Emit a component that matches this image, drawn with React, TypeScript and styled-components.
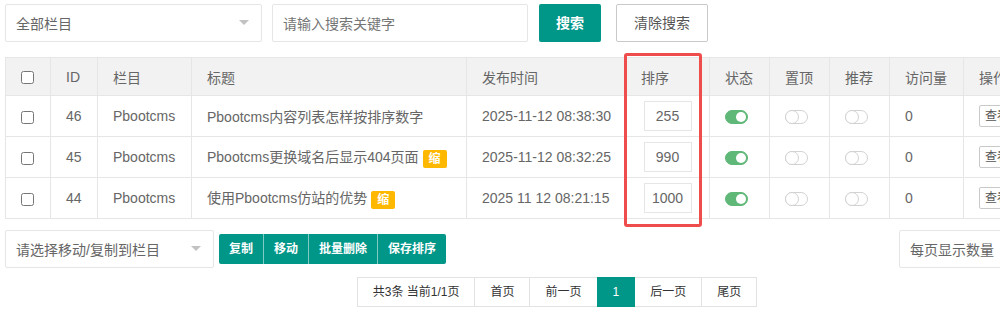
import React from "react";
import styled, { createGlobalStyle } from "styled-components";

const GlobalStyle = createGlobalStyle`
  html, body { margin: 0; padding: 0; overflow: hidden; background: #fff; }
  body {
    font-family: "Liberation Sans", "Noto Sans CJK SC", sans-serif;
    font-size: 14px;
    color: #666;
  }
`;

const Page = styled.div`
  width: 1103px;
  padding: 4px 0 0 5px;
`;

const Toolbar = styled.div`
  display: flex;
  align-items: center;
  height: 38px;
`;

const SelectBox = styled.div<{ $w: number; $ml?: number }>`
  position: relative;
  box-sizing: border-box;
  width: ${(p) => p.$w}px;
  height: 38px;
  margin-left: ${(p) => p.$ml ?? 0}px;
  border: 1px solid #e6e6e6;
  border-radius: 2px;
  padding-left: 10px;
  display: flex;
  align-items: center;
  color: #666;
  background: #fff;
  flex-shrink: 0;
`;

const Arrow = styled.span`
  position: absolute;
  right: 12px;
  top: 50%;
  margin-top: -3px;
  border: 5px solid transparent;
  border-top-color: #c2c2c2;
  border-bottom-width: 0;
`;

const Placeholder = styled.span`
  color: #757575;
`;

const PrimaryBtn = styled.div<{ $ml: number }>`
  box-sizing: border-box;
  height: 38px;
  line-height: 38px;
  padding: 0 17px;
  margin-left: ${(p) => p.$ml}px;
  background: #009688;
  color: #fff;
  border-radius: 2px;
  font-size: 14px;
  font-weight: bold;
`;

const PlainBtn = styled.div<{ $ml: number }>`
  box-sizing: border-box;
  height: 38px;
  line-height: 36px;
  padding: 0 17px;
  margin-left: ${(p) => p.$ml}px;
  background: #fff;
  color: #555;
  border: 1px solid #c9c9c9;
  border-radius: 2px;
  font-size: 14px;
`;

const TableWrap = styled.div`
  position: relative;
  margin-top: 15px;
`;

const Table = styled.table`
  width: 1103px;
  table-layout: fixed;
  border-collapse: collapse;
  border: 1px solid #e6e6e6;
`;

const Th = styled.th`
  height: 38px;
  padding: 0 15px;
  text-align: left;
  font-weight: normal;
  font-size: 14px;
  color: #666;
  background: #f2f2f2;
  border: 1px solid #e6e6e6;
  white-space: nowrap;
  overflow: hidden;
  box-sizing: border-box;
`;

const Td = styled.td`
  height: 41px;
  padding: 0 15px;
  font-size: 14px;
  color: #666;
  border: 1px solid #e6e6e6;
  white-space: nowrap;
  overflow: hidden;
  box-sizing: border-box;
`;

const CenterTd = styled(Td)`
  text-align: center;
  padding: 0;
`;

const Check = styled.input`
  margin: 0;
  width: 13px;
  height: 13px;
  vertical-align: middle;
`;

const Badge = styled.span`
  display: inline-block;
  height: 18px;
  line-height: 18px;
  padding: 0 6px;
  margin-left: 4px;
  background: #ffb800;
  color: #fff;
  font-size: 12px;
  font-weight: bold;
  border-radius: 2px;
  vertical-align: middle;
`;

const SortInput = styled.div`
  display: inline-block;
  box-sizing: border-box;
  width: 48px;
  height: 30px;
  line-height: 28px;
  border: 1px solid #e6e6e6;
  text-align: center;
  color: #666;
  vertical-align: middle;
  background: #fff;
`;

const Switch = styled.span<{ $on: boolean }>`
  position: relative;
  display: inline-block;
  box-sizing: border-box;
  width: 23px;
  height: 14px;
  border-radius: 7px;
  border: 1px solid ${(p) => (p.$on ? "#5fb878" : "#d2d2d2")};
  background: ${(p) => (p.$on ? "#5fb878" : "#fff")};
  vertical-align: middle;
`;

const Knob = styled.span<{ $on: boolean }>`
  position: absolute;
  box-sizing: border-box;
  border-radius: 50%;
  background: #fff;
  ${(p) =>
    p.$on
      ? `width: 10px; height: 10px; right: 1px; top: 1px;`
      : `width: 14px; height: 14px; left: -1px; top: -1px; border: 1px solid #d2d2d2;`}
`;

const XsBtn = styled.span`
  display: inline-block;
  box-sizing: border-box;
  height: 22px;
  line-height: 20px;
  padding: 0 5px;
  margin-right: 4px;
  border: 1px solid #c9c9c9;
  border-radius: 2px;
  font-size: 12px;
  color: #555;
  vertical-align: middle;
`;

const Highlight = styled.div`
  position: absolute;
  left: 619px;
  top: -4px;
  width: 78px;
  height: 174px;
  box-sizing: border-box;
  border: 3px solid #ef4c4c;
  border-radius: 3px;
  pointer-events: none;
`;

const BottomBar = styled.div`
  display: flex;
  align-items: center;
  justify-content: space-between;
  margin-top: 11px;
`;

const LeftGroup = styled.div`
  display: flex;
  align-items: center;
`;

const BtnGroup = styled.div`
  display: flex;
  margin-left: 5px;
  height: 30px;
`;

const GroupBtn = styled.div`
  height: 30px;
  line-height: 30px;
  padding: 0 10px;
  background: #009688;
  color: #fff;
  font-size: 12px;
  font-weight: bold;
  & + & { border-left: 1px solid rgba(255, 255, 255, 0.5); }
  &:first-child { border-radius: 2px 0 0 2px; }
  &:last-child { border-radius: 0 2px 2px 0; }
`;

const Pager = styled.div`
  display: flex;
  justify-content: center;
  margin-top: 9px;
`;

const PageItem = styled.span<{ $active?: boolean }>`
  height: 28px;
  line-height: 28px;
  padding: 0 15px;
  margin-right: -1px;
  border: 1px solid ${(p) => (p.$active ? "#009688" : "#e2e2e2")};
  background: ${(p) => (p.$active ? "#009688" : "#fff")};
  color: ${(p) => (p.$active ? "#fff" : "#333")};
  font-size: 12px;
  position: relative;
  z-index: ${(p) => (p.$active ? 1 : 0)};
`;

const rows = [
  { id: 46, title: "Pbootcms内容列表怎样按排序数字", badge: false, date: "2025-11-12 08:38:30", sort: "255" },
  { id: 45, title: "Pbootcms更换域名后显示404页面", badge: true, date: "2025-11-12 08:32:25", sort: "990" },
  { id: 44, title: "使用Pbootcms仿站的优势", badge: true, date: "2025 11 12 08:21:15", sort: "1000" },
];

const widths = [45, 47, 94, 275, 159, 84, 60, 60, 60, 74, 145];

export default function App() {
  return (
    <>
      <GlobalStyle />
      <Page>
        <Toolbar>
          <SelectBox $w={257}>
            全部栏目
            <Arrow />
          </SelectBox>
          <SelectBox $w={256} $ml={10}>
            <Placeholder>请输入搜索关键字</Placeholder>
          </SelectBox>
          <PrimaryBtn $ml={11}>搜索</PrimaryBtn>
          <PlainBtn $ml={15}>清除搜索</PlainBtn>
        </Toolbar>

        <TableWrap>
          <Table>
            <colgroup>
              {widths.map((w, i) => (
                <col key={i} style={{ width: w }} />
              ))}
            </colgroup>
            <thead>
              <tr>
                <Th>
                  <Check type="checkbox" readOnly />
                </Th>
                <Th>ID</Th>
                <Th>栏目</Th>
                <Th>标题</Th>
                <Th>发布时间</Th>
                <Th>排序</Th>
                <Th>状态</Th>
                <Th>置顶</Th>
                <Th>推荐</Th>
                <Th>访问量</Th>
                <Th>操作</Th>
              </tr>
            </thead>
            <tbody>
              {rows.map((r) => (
                <tr key={r.id}>
                  <Td>
                    <Check type="checkbox" readOnly />
                  </Td>
                  <Td>{r.id}</Td>
                  <Td>Pbootcms</Td>
                  <Td>
                    {r.title}
                    {r.badge && <Badge>缩</Badge>}
                  </Td>
                  <Td>{r.date}</Td>
                  <CenterTd>
                    <SortInput>{r.sort}</SortInput>
                  </CenterTd>
                  <Td>
                    <Switch $on>
                      <Knob $on />
                    </Switch>
                  </Td>
                  <Td>
                    <Switch $on={false}>
                      <Knob $on={false} />
                    </Switch>
                  </Td>
                  <Td>
                    <Switch $on={false}>
                      <Knob $on={false} />
                    </Switch>
                  </Td>
                  <Td>0</Td>
                  <Td>
                    <XsBtn>查看</XsBtn>
                    <XsBtn>修改</XsBtn>
                    <XsBtn>删除</XsBtn>
                  </Td>
                </tr>
              ))}
            </tbody>
          </Table>
          <Highlight />
        </TableWrap>

        <BottomBar>
          <LeftGroup>
            <SelectBox $w={209}>
              请选择移动/复制到栏目
              <Arrow />
            </SelectBox>
            <BtnGroup>
              <GroupBtn>复制</GroupBtn>
              <GroupBtn>移动</GroupBtn>
              <GroupBtn>批量删除</GroupBtn>
              <GroupBtn>保存排序</GroupBtn>
            </BtnGroup>
          </LeftGroup>
          <SelectBox $w={209}>
            每页显示数量
            <Arrow />
          </SelectBox>
        </BottomBar>

        <Pager>
          <PageItem>共3条 当前1/1页</PageItem>
          <PageItem>首页</PageItem>
          <PageItem>前一页</PageItem>
          <PageItem $active>1</PageItem>
          <PageItem>后一页</PageItem>
          <PageItem>尾页</PageItem>
        </Pager>
      </Page>
    </>
  );
}
